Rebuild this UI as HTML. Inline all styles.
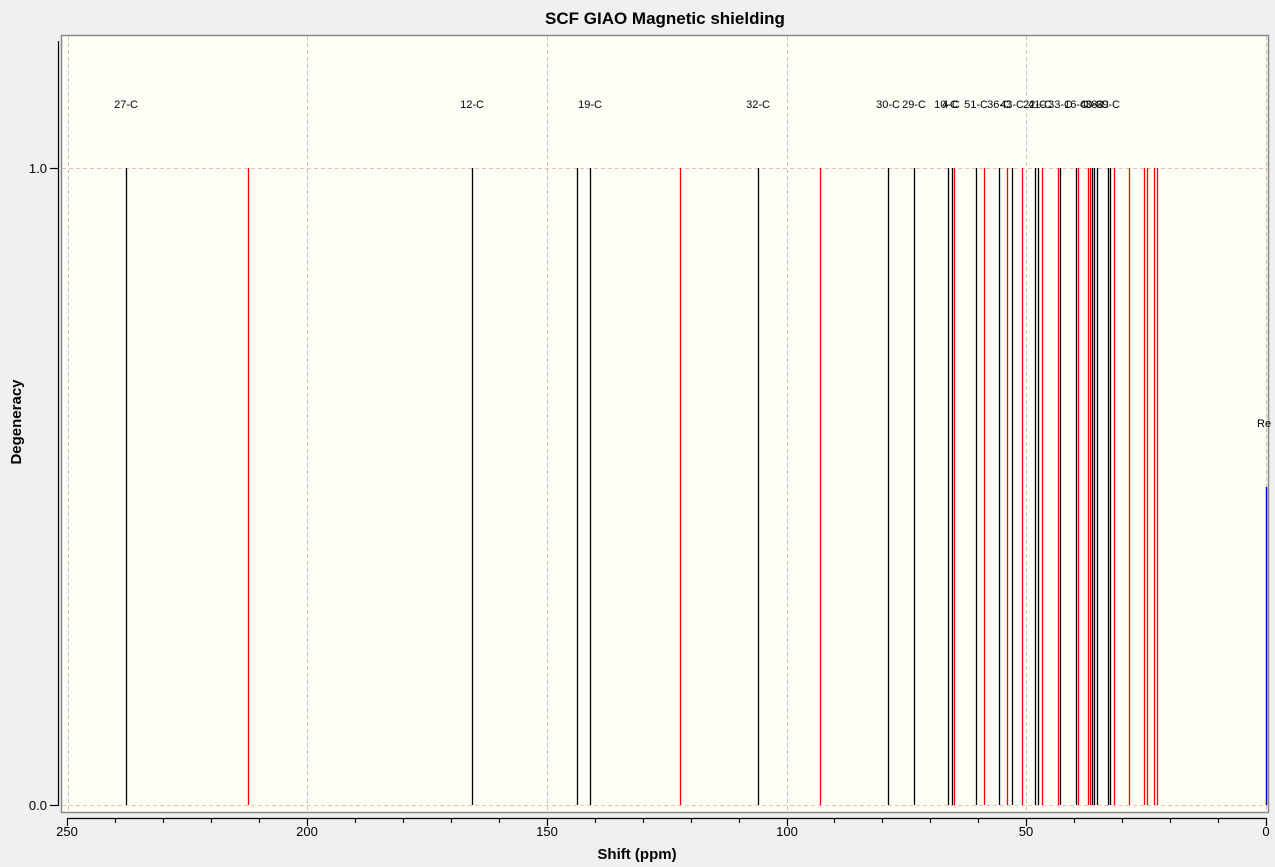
<!DOCTYPE html>
<html><head><meta charset="utf-8"><style>
html,body{margin:0;padding:0;background:#f0f0f0;}
svg{display:block;font-family:"Liberation Sans",sans-serif;}
</style></head><body>
<svg width="1275" height="867" xmlns="http://www.w3.org/2000/svg">
<rect width="1275" height="867" fill="#f0f0f0"/>
<text x="665" y="24" font-size="17" font-weight="bold" text-anchor="middle" fill="#000">SCF GIAO Magnetic shielding</text>
<rect x="61.5" y="35.5" width="1207" height="777" fill="#fffff7" stroke="#8a8a8a" stroke-width="1.5"/>
<g stroke="#c4c4c4" stroke-dasharray="4,3" stroke-width="1">
<line x1="68.5" y1="36" x2="68.5" y2="812"/>
<line x1="307.5" y1="36" x2="307.5" y2="812"/>
<line x1="547.5" y1="36" x2="547.5" y2="812"/>
<line x1="787.5" y1="36" x2="787.5" y2="812"/>
<line x1="1026.5" y1="36" x2="1026.5" y2="812"/>
<line x1="1266.5" y1="36" x2="1266.5" y2="812"/>
</g>
<g stroke="#f6b8b8" stroke-dasharray="4,3" stroke-width="1">
<line x1="62" y1="168.5" x2="1268" y2="168.5"/>
<line x1="62" y1="805.5" x2="1268" y2="805.5"/>
</g>
<g stroke="#000" stroke-width="1.2">
<line x1="58.5" y1="41" x2="58.5" y2="806"/>
<line x1="50" y1="168.5" x2="58" y2="168.5"/>
<line x1="50" y1="805.5" x2="58" y2="805.5"/>
<line x1="67" y1="818.5" x2="1267" y2="818.5"/>
<path d="M67.5 818V826M115.5 818V823M163.5 818V823M211.5 818V823M259.5 818V823M307.5 818V826M355.5 818V823M403.5 818V823M451.5 818V823M499.5 818V823M547.5 818V826M595.5 818V823M643.5 818V823M691.5 818V823M739.5 818V823M787.5 818V826M834.5 818V823M882.5 818V823M930.5 818V823M978.5 818V823M1026.5 818V826M1074.5 818V823M1122.5 818V823M1170.5 818V823M1218.5 818V823M1266.5 818V826"/>
</g>
<g font-size="13" fill="#000" text-anchor="end">
<text x="47" y="173">1.0</text>
<text x="47" y="810">0.0</text>
</g>
<g font-size="13" fill="#000" text-anchor="middle">
<text x="67" y="836">250</text><text x="307" y="836">200</text><text x="547" y="836">150</text>
<text x="787" y="836">100</text><text x="1026" y="836">50</text><text x="1266" y="836">0</text>
</g>
<text x="637" y="859" font-size="15" font-weight="bold" text-anchor="middle">Shift (ppm)</text>
<text transform="translate(21,422) rotate(-90)" font-size="15" font-weight="bold" text-anchor="middle">Degeneracy</text>
<path stroke="#000" stroke-width="1.3" d="M126.5 168V805M472.5 168V805M577.5 168V805M590.5 168V805M758.5 168V805M888.5 168V805M914.5 168V805M948.5 168V805M952.5 168V805M976.5 168V805M999.5 168V805M1012.5 168V805M1035.5 168V805M1038.5 168V805M1060.5 168V805M1076.5 168V805M1092.5 168V805M1094.5 168V805M1097.5 168V805M1108.5 168V805M1110.5 168V805"/>
<path stroke="#ff0000" stroke-width="1.3" d="M248.5 168V805M680.5 168V805M820.5 168V805M954.5 168V805M984.5 168V805M1007.5 168V805M1022.5 168V805M1042.5 168V805M1058.5 168V805M1078.5 168V805M1088.5 168V805M1090.5 168V805M1114.5 168V805M1129.5 168V805M1144.5 168V805M1147.5 168V805M1154.5 168V805M1157.5 168V805"/>
<line x1="1266.5" y1="487" x2="1266.5" y2="805" stroke="#0000cc" stroke-width="1.5"/>
<text x="1257" y="427" font-size="11">Re</text>
<g font-size="11" fill="#000" text-anchor="middle">
<text x="126" y="108">27-C</text>
<text x="472" y="108">12-C</text>
<text x="590" y="108">19-C</text>
<text x="758" y="108">32-C</text>
<text x="888" y="108">30-C</text>
<text x="914" y="108">29-C</text>
<text x="946" y="108">10-C</text>
<text x="951" y="108">4-C</text>
<text x="976" y="108">51-C</text>
<text x="999" y="108">36-C</text>
<text x="1012" y="108">43-C</text>
<text x="1035" y="108">22-C</text>
<text x="1040" y="108">41-C</text>
<text x="1060" y="108">33-C</text>
<text x="1076" y="108">16-C</text>
<text x="1092" y="108">40-C</text>
<text x="1097" y="108">38-C</text>
<text x="1108" y="108">39-C</text>
</g>
</svg>
</body></html>
